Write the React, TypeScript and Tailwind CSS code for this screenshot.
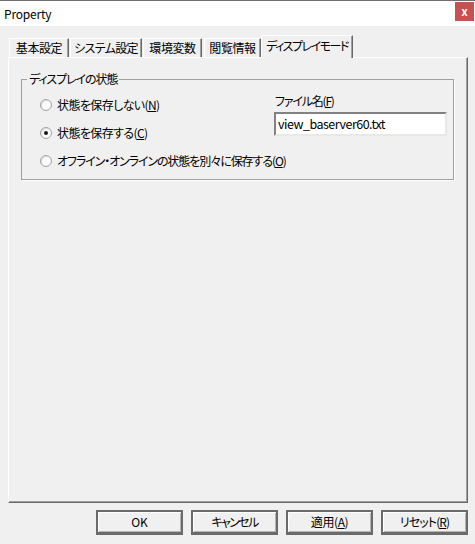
import type { ReactNode } from 'react';

// Windows classic style "Property" dialog, Display mode tab

const tabs = [
  { label: '基本設定', cls: 'w-[60px]' },
  { label: 'システム設定', cls: 'w-[72px] ml-[1px] tracking-[-0.7px]' },
  { label: '環境変数', cls: 'w-[59px] ml-[1px]' },
  { label: '閲覧情報', cls: 'w-[57px] ml-[2px]' },
];

const Radio = ({ checked, children, cls = '' }: { checked?: boolean; children: ReactNode; cls?: string }) => (
  <div className="flex h-[28px] items-center">
    <div className="flex h-[12px] w-[12px] items-center justify-center rounded-full border border-[#a3a3a3] bg-[#fbfbfb] shadow-[inset_1px_1px_1px_#dcdcdc]">
      {checked && <div className="h-[4px] w-[4px] rounded-full bg-[#1a1a1a]" />}
    </div>
    <span className={`ml-[5px] whitespace-nowrap ${cls}`}>{children}</span>
  </div>
);

const Button = ({ children, cls = '' }: { children: ReactNode; cls?: string }) => (
  <button className={`flex h-[25px] w-[87px] items-center justify-center border-2 border-b-[3px] border-[#6a6a6a] bg-[#f0f0f0] text-[12px] text-black shadow-[inset_1px_1px_0_#ffffff,inset_-1px_-1px_0_#b4b4b4] ${cls}`}>
    {children}
  </button>
);

const App = () => {
  return (
    <div className="h-[544px] w-[475px] overflow-hidden border-t border-[#6e6e6e] bg-[#f0f0f0] font-['Noto_Sans_CJK_JP',sans-serif] text-[12px] leading-[16px] tracking-[-0.4px] text-black [font-feature-settings:'palt']">
      {/* Title bar */}
      <div className="flex h-[25px] items-center justify-between bg-white pl-[4px] pr-[1px]">
        <span className="text-[12px] tracking-[-0.2px]">Property</span>
        <div className="mb-[4px] flex h-[19px] w-[19px] items-center justify-center bg-[#c75050] text-[11px] font-bold leading-none text-white">
          x
        </div>
      </div>

      {/* Body */}
      <div className="pl-[8px] pr-[7px] pt-[9px]">
        {/* Tabs */}
        <div className="flex h-[22px] items-end pl-[1px]">
          {tabs.map((t) => (
            <div
              key={t.label}
              className={`flex h-[19px] items-center justify-center whitespace-nowrap border-l border-t border-white shadow-[inset_-1px_0_0_#a0a0a0] ${t.cls} border-r border-r-[#696969]`}
            >
              {t.label}
            </div>
          ))}
          <div className="relative z-10 -mb-px flex h-[23px] w-[92px] items-center justify-center whitespace-nowrap border-l border-r border-t border-white border-r-[#696969] bg-[#f0f0f0] pb-[2px] tracking-[-1.5px] shadow-[inset_-1px_0_0_#a0a0a0]">
            ディスプレイモード
          </div>
        </div>

        {/* Panel */}
        <div className="h-[446px] border border-white border-b-[#696969] border-r-[#696969] pl-[12px] pt-[13px] shadow-[inset_-1px_-1px_0_#a0a0a0]">
          <fieldset className="w-[433px] border border-[#a0a0a0] pb-[4px] pt-[4px] shadow-[1px_1px_0_#ffffff]">
            <legend className="ml-[5px] px-[2px] leading-[16px] tracking-[-1.1px]">ディスプレイの状態</legend>
            <div className="flex">
              <div className="w-[252px] pl-[18px]">
                <Radio cls="tracking-[-0.6px]">
                  状態を保存しない(<u>N</u>)
                </Radio>
                <Radio checked cls="tracking-[-0.6px]">
                  状態を保存する(<u>C</u>)
                </Radio>
              </div>
              <div className="w-[173px] pt-[2px]">
                <div className="pl-[1px] tracking-[-1.2px]">
                  ファイル名(<u>F</u>)
                </div>
                <div className="mt-[3px] flex h-[24px] items-center border-2 border-[#828282] border-b-[#e8e8e8] border-r-[#e8e8e8] bg-white pl-[2px] text-[12.5px] tracking-[-0.5px]">
                  view_baserver60.txt
                </div>
              </div>
            </div>
            <div className="pl-[18px]">
              <Radio cls="tracking-[-1.1px]">
                オフライン・オンラインの状態を別々に保存する(<u>O</u>)
              </Radio>
            </div>
          </fieldset>
        </div>

        {/* Buttons */}
        <div className="mt-[7px] flex justify-end gap-[8px]">
          <Button cls="tracking-normal">OK</Button>
          <Button cls="tracking-[-1.6px]">キャンセル</Button>
          <Button cls="tracking-[-0.4px]">
            適用(<u>A</u>)
          </Button>
          <Button cls="tracking-[-0.9px]">
            リセット(<u>R</u>)
          </Button>
        </div>
      </div>
    </div>
  );
};

export default App;
